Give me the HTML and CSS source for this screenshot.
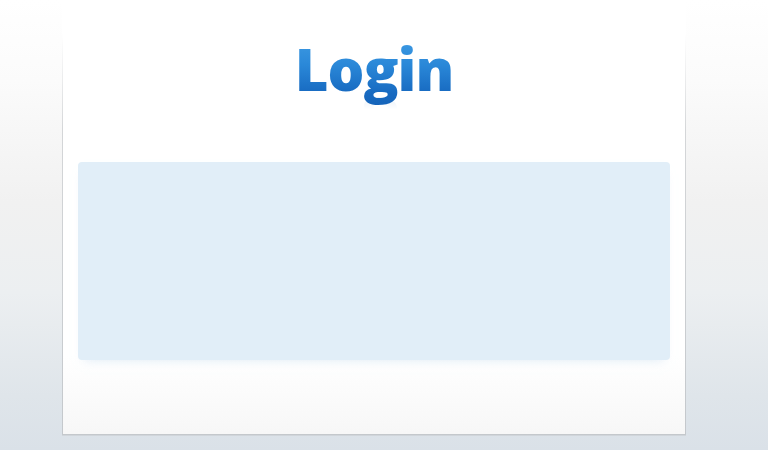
FILE: index.html
```html
<!DOCTYPE html>
<html lang="en">
<head>
<meta charset="utf-8">
<title>Login</title>
<link rel="stylesheet" href="styles.css">
</head>
<body>
<main class="stage">
  <section class="card">
    <h1 class="title">Login</h1>
    <div class="panel"></div>
  </section>
</main>
</body>
</html>
```
FILE: styles.css
```css
html, body {
  margin: 0;
  padding: 0;
  height: 100%;
}
body {
  background: linear-gradient(to bottom, #ffffff 0%, #fbfbfb 18%, #f1f1f1 45%, #eceff1 65%, #dfe5ea 88%, #dae1e8 100%);
  font-family: "Open Sans", "Liberation Sans", sans-serif;
  overflow: hidden;
}
.stage {
  display: flex;
  padding-left: 62px;
  height: 450px;
  box-sizing: border-box;
}
.card {
  width: 624px;
  height: 435px;
  box-sizing: border-box;
  background: linear-gradient(to bottom, #ffffff 0%, #ffffff 82%, #f7f7f7 100%);
  border-left: 1px solid transparent;
  border-right: 1px solid transparent;
  border-bottom: 1px solid #b9bdc1;
  border-image: linear-gradient(to bottom, rgba(200,204,208,0) 0%, rgba(200,204,208,0) 8%, #d4d6d8 30%, #c4c8cc 100%) 1;
  box-shadow: 0 1px 0 #d0d5da;
  display: flex;
  flex-direction: column;
  align-items: center;
  padding: 27px 15px 0 15px;
}
.title {
  margin: 0;
  font-size: 58px;
  line-height: 84px;
  font-weight: 800;
  letter-spacing: -1px;
  background: linear-gradient(to bottom, #46a2e8 0%, #2a88d8 45%, #1769c0 80%, #1461b6 100%);
  -webkit-background-clip: text;
  background-clip: text;
  color: transparent;
  -webkit-box-reflect: below -20px linear-gradient(to bottom, transparent 78%, rgba(255,255,255,0.14) 100%);
}
.panel {
  align-self: stretch;
  margin-top: 51px;
  height: 198px;
  background: #e1eef8;
  border-radius: 4px;
  box-shadow: 0 6px 10px -6px rgba(200, 222, 240, 0.6);
}
```
